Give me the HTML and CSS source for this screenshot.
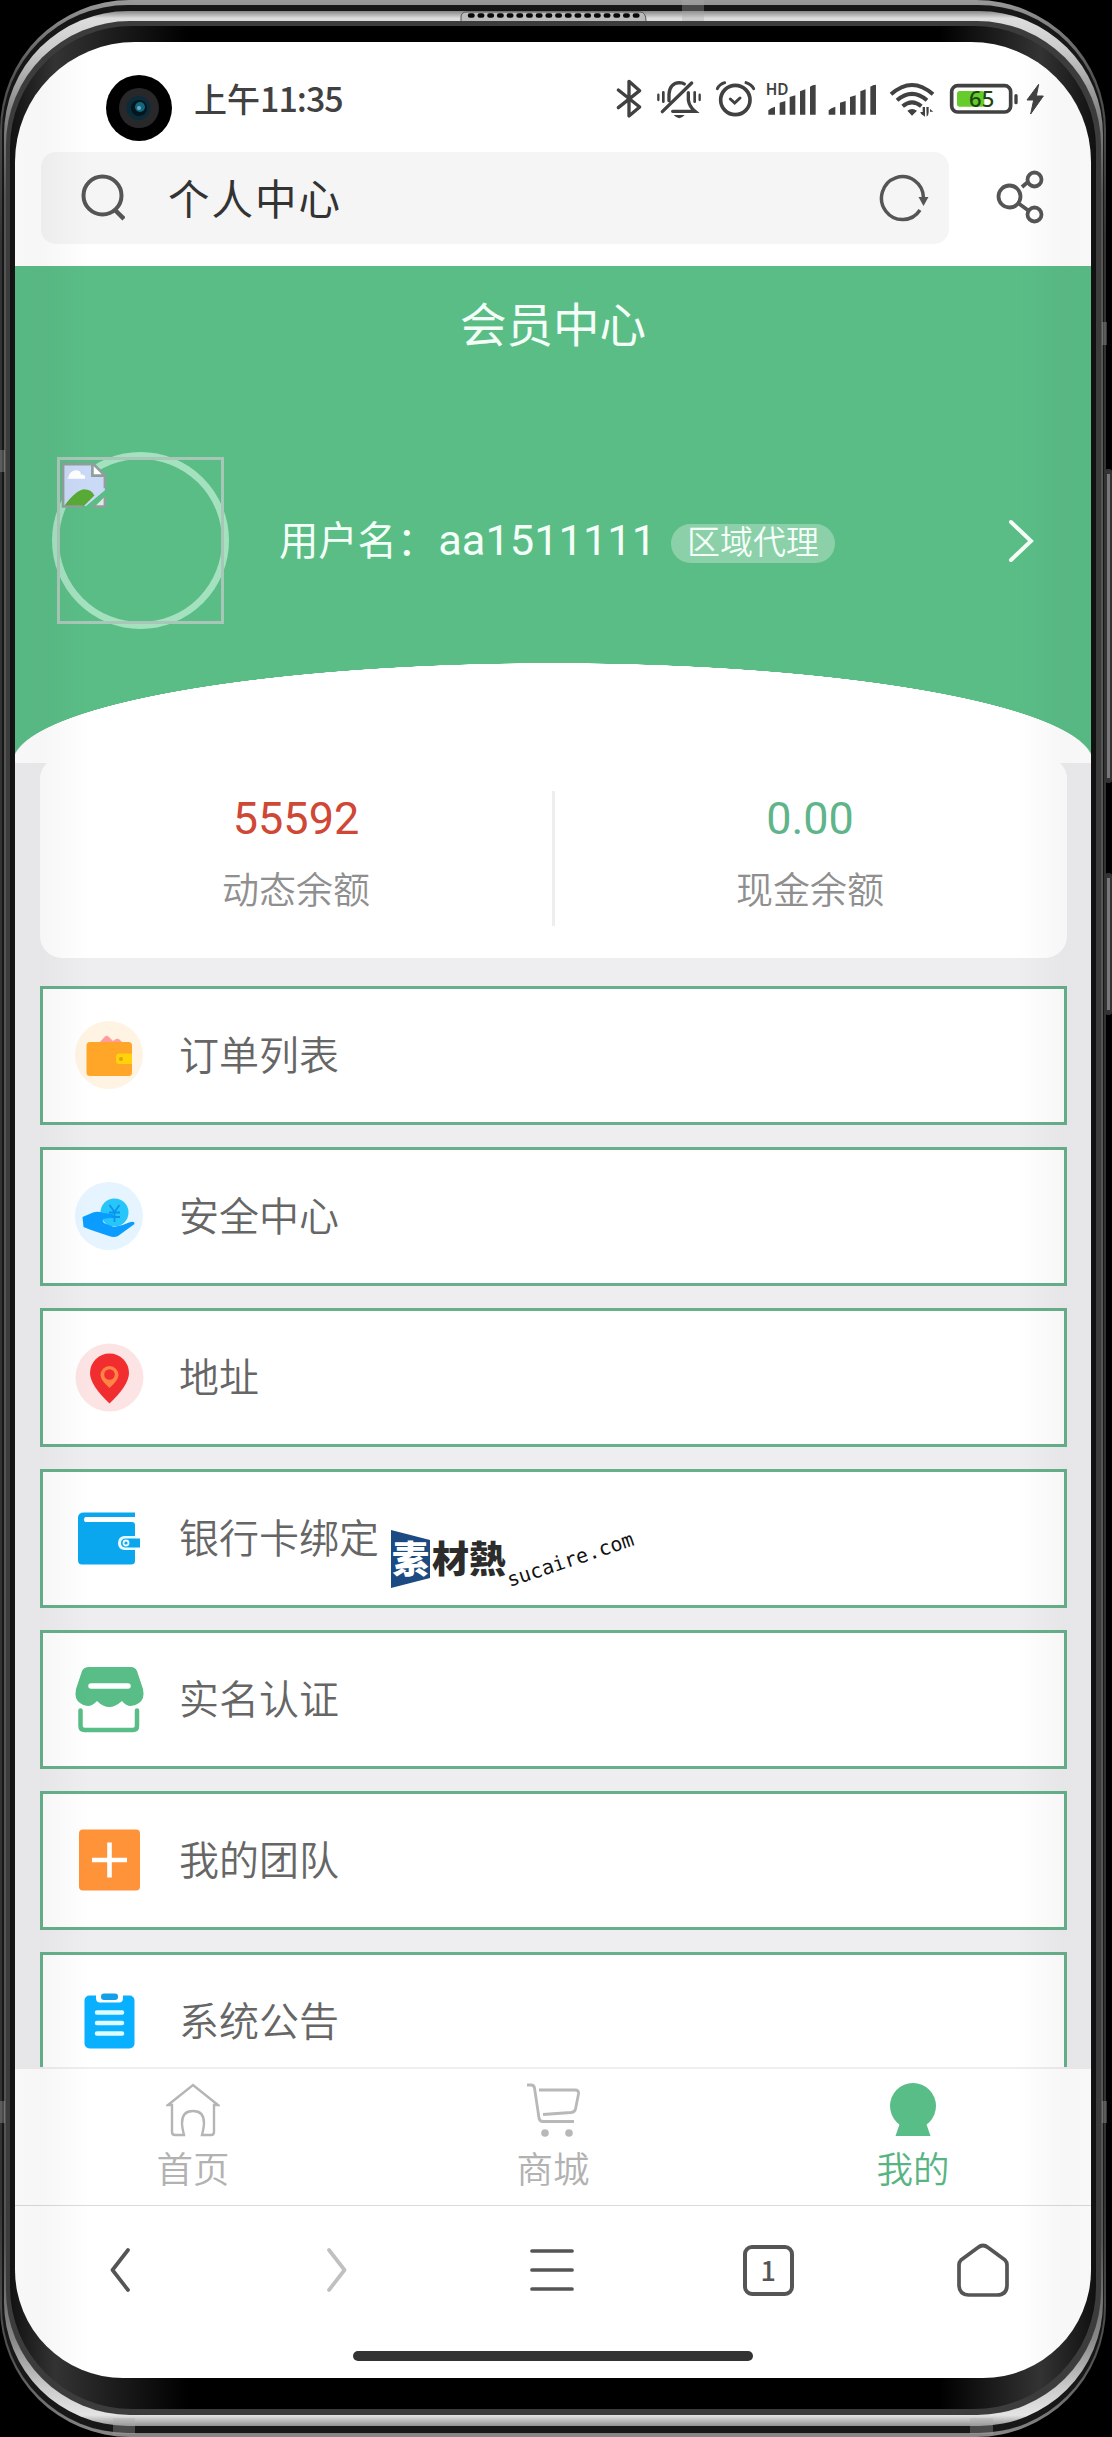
FILE: index.html
```html
<!DOCTYPE html>
<html lang="zh-CN">
<head>
<meta charset="utf-8">
<title>个人中心</title>
<link rel="stylesheet" href="styles.css">
</head>
<body>
<div class="phone">
  <svg class="shell" viewBox="0 0 1112 2437" width="1112" height="2437" aria-hidden="true">
    <defs>
      <linearGradient id="rim" gradientUnits="userSpaceOnUse" x1="0" y1="0" x2="0" y2="2437">
        <stop offset="0" stop-color="#999"/><stop offset=".03" stop-color="#555"/><stop offset=".1" stop-color="#333"/>
        <stop offset=".9" stop-color="#333"/><stop offset=".97" stop-color="#555"/><stop offset="1" stop-color="#888"/>
      </linearGradient>
      <linearGradient id="metal" gradientUnits="userSpaceOnUse" x1="0" y1="0" x2="0" y2="2437">
        <stop offset=".004" stop-color="#777"/><stop offset=".0075" stop-color="#ddd"/><stop offset=".02" stop-color="#ccc"/><stop offset=".045" stop-color="#888"/><stop offset=".08" stop-color="#555"/>
        <stop offset=".92" stop-color="#555"/><stop offset=".96" stop-color="#888"/><stop offset=".98" stop-color="#ccc"/><stop offset=".991" stop-color="#e4e4e4"/><stop offset=".996" stop-color="#888"/>
      </linearGradient>
      <linearGradient id="bezel" gradientUnits="userSpaceOnUse" x1="0" y1="0" x2="1106" y2="0">
        <stop offset="0" stop-color="#0a0a0a"/><stop offset=".05" stop-color="#333"/><stop offset=".17" stop-color="#000"/>
        <stop offset=".85" stop-color="#000"/><stop offset=".94" stop-color="#333"/><stop offset="1" stop-color="#0a0a0a"/>
      </linearGradient>
    </defs>
    <rect x="1105" y="469" width="7" height="314" rx="3" fill="#333"/><rect x="1107" y="474" width="3" height="304" fill="#777"/>
    <rect x="1105" y="873" width="7" height="142" rx="3" fill="#333"/><rect x="1107" y="878" width="3" height="132" fill="#777"/>
    <rect x="0" y="0" width="1106" height="2437" rx="130" fill="url(#rim)"/>
    <rect x="2" y="5" width="1102" height="2428" rx="126" fill="#171717"/>
    <rect x="4" y="11" width="1099" height="2415" rx="124" fill="url(#metal)"/>
    <rect x="6" y="21" width="1095" height="2394" rx="124" fill="#3c3c3c"/>
    <rect x="10" y="26" width="1086" height="2383" rx="122" fill="url(#bezel)"/>
    <path d="M461 21V17q0-5 6-5h173q6 0 6 9" fill="#bbb" stroke="#555"/>
    <path d="M470 15.5H640" stroke="#080808" stroke-width="4.5" stroke-linecap="round" stroke-dasharray="2.5 7.2"/>
    <g fill="#aaa" fill-opacity=".35"><path d="M682 0h22v21h-22zM0 450h5v22H0zM0 2101h5v22H0zM1102 322h5v23h-5zM1102 2101h5v22h-5zM113 2418h22v16h-22zM970 2418h23v16h-23z"/></g>
  </svg>

  <div class="screen">
    <div class="statusbar">
      <svg class="camera" viewBox="0 0 66 66" width="66" height="66">
        <circle cx="33" cy="33" r="33"/><circle cx="33" cy="33" r="20" fill="#28282a"/><circle cx="32.500" cy="33" r="12" fill="#0c2b38"/><circle cx="33" cy="33" r="8" fill="#06141c"/>
        <circle cx="34" cy="32" r="5" fill="#15657d"/><circle cx="33" cy="33" r="2" fill="#63b2c4"/>
      </svg>
      <span class="time">上午<b>11:35</b></span>
      <svg class="status-icons" viewBox="0 0 1380 240" width="460" height="80" fill="none" stroke="#414141">
        <path d="M55 90L119 141L87 168V64L119 92L55 143" stroke-width="10" stroke-linejoin="round" stroke-linecap="round"/>
        <g stroke-width="10" stroke-linecap="round"><path d="M187 155L275 69M207 122V103Q209 70 238 68Q248 68 253 72M265 98V120Q268 140 285 154H218"/><path d="M190 97V125M284 97V125" stroke-width="8"/><path d="M175 104V120M299 104V120" stroke-width="7"/></g>
        <path d="M221 165H254Q238 184 221 165Z" fill="#414141" stroke="none"/>
        <circle cx="406" cy="120" r="44" stroke-width="11"/><path d="M391 117L404 129L420 114" stroke-width="9" stroke-linecap="round"/><path d="M352 86Q358 73 374 68M438 68Q455 74 461 86" stroke-width="9" stroke-linecap="round"/>
        <g fill="#414141" stroke="none">
          <path id="bars" d="M505 164V151Q512 143 525 140V164ZM539 164V128L556 123V164ZM569 164V111L586 106V164ZM600 164V94L616 88V164ZM630 164V80Q638 74 647 74V164Z"/>
          <use href="#bars" x="181"/>
          <path d="M922 152Q936 142 951 152L936 167ZM968 141H975V170Q961 162 961 156H968ZM979 141H986V157Q986 167 980 170ZM990 147L1000 155H990Z"/>
          <text class="hd" x="497" y="106">HD</text>
        </g>
        <path d="M873 103Q936 47 999 103M891 121Q936 82 981 121M908 139Q936 115 964 139" stroke-width="12"/>
        <rect x="1071" y="93" width="82" height="47" rx="8" fill="#65cc2b" stroke="none"/>
        <rect x="1055" y="77" width="177" height="79" rx="18" stroke-width="11"/>
        <path d="M1248 107V128" stroke-width="10" stroke-linecap="round"/>
        <text class="level" x="1145" y="142">65</text>
        <path d="M1316 73L1281 120H1301L1292 162L1330 108H1309Z" fill="#414141" stroke-width="3" stroke-linejoin="round"/>
      </svg>
    </div>

    <div class="addressbar">
      <div class="address">
        <svg viewBox="0 0 44 48" width="44" height="48" fill="none" stroke="#555" stroke-width="4"><circle cx="21.500" cy="21.500" r="19"/><path d="M34 36L43 45" stroke-width="4.500"/></svg>
        <span class="address-title">个人中心</span>
        <svg class="reload" viewBox="0 0 50 50" width="50" height="50" fill="none" stroke="#555" stroke-width="3.500"><path d="M41 37A21 21.500 0 1 1 44.500 25"/><path d="M39.500 24H49.500L44.500 33Z" fill="#555" stroke="none"/></svg>
      </div>
      <svg class="share" viewBox="0 0 50 54" width="50" height="54" fill="none" stroke="#555" stroke-width="3.800"><circle cx="14.500" cy="26.500" r="11"/><circle cx="39.500" cy="9.500" r="7"/><circle cx="39.500" cy="44.500" r="7"/><path d="M27 17L34 11M23 33L34 41"/></svg>
    </div>

    <header class="hero">
      <h1 class="hero-title">会员中心</h1>
      <div class="profile">
        <div class="avatar">
          <div class="avatar-box">
            <svg viewBox="0 0 44 44" width="46" height="46">
              <path d="M2 2H31V12H42V27L24 42H2Z" fill="#c9d9f6"/><path d="M31 2L42 13H31Z" fill="#fff"/>
              <path d="M7 15Q8 9 14 8Q19 8 19 12Q24 12 23 16H6Z" fill="#fff"/>
              <path d="M3 42Q14 27 22 26Q29 26 32 32L21 43Z" fill="#58aa35"/>
              <path d="M32 43L42 33V43Z" fill="#dcebe4"/>
              <path d="M21 42.500H2V2H31L42 13V25M30 2V13H42M30 42.500H42V33" fill="none" stroke="#8f9f9b" stroke-width="2.500"/>
            </svg>
          </div>
        </div>
        <span class="username">用户名：</span><span class="userid">aa1511111</span><span class="badge">区域代理</span>
        <svg class="more" viewBox="0 0 26 46" width="26" height="46" fill="none" stroke="#f4fff8" stroke-width="4" stroke-linecap="round"><path d="M3 4L23 23L3 42"/></svg>
      </div>
    </header>

    <main class="content">
      <section class="balances">
        <div class="balance"><strong class="amount amount-red">55592</strong><span class="label">动态余额</span></div>
        <div class="balance"><strong class="amount">0.00</strong><span class="label">现金余额</span></div>
      </section>
      <nav class="menu">
        <a class="item">
          <svg class="icon" viewBox="0 0 68 68"><circle cx="34" cy="34" r="34" fill="#fff3e3"/><path d="M24 22L30 15.500Q32 14 34 16L38 20L41 18Q43 17 45 19L48 22Z" fill="#ff9c9c"/><rect x="11.500" y="21" width="45.500" height="34" rx="3.500" fill="#ffa527"/><path d="M57 32.500H44Q41 32.500 41 36V40Q41 43 44 43H57Z" fill="#ffd20c"/><circle cx="46" cy="38" r="2" fill="#e2a500"/></svg>
          <span>订单列表</span></a>
        <a class="item">
          <svg class="icon" viewBox="0 0 68 68"><circle cx="34" cy="34" r="34" fill="#e5f4fe"/><circle cx="39.500" cy="30.500" r="14" fill="#27c6fa"/><path d="M34.500 23L39.500 30L44.500 23M34 30.500H45M34 35H45M39.500 30V40" fill="none" stroke="#0a94ea" stroke-width="1.800"/><path d="M7.500 35L18 30.500Q23 29 28 31L38 32Q40 35 35 36L28 37Q27 39 29 41L39 45Q47 44 54 40.500Q60 38.500 59.500 42L43 54Q39 56 34 54L16 48L8.500 45Z" fill="#0a9dff"/></svg>
          <span>安全中心</span></a>
        <a class="item">
          <svg class="icon" viewBox="0 0 68 68"><circle cx="34.500" cy="34.500" r="34" fill="#fde4e4"/><path d="M34.500 60.500Q15 42 15 30A19.500 19.500 0 0 1 54 30Q54 42 34.500 60.500Z" fill="#f12d2f"/><path d="M34.500 45Q25.500 37 25.500 32A9 9 0 0 1 43.500 32Q43.500 37 34.500 45Z" fill="#ff8446"/><circle cx="34.500" cy="31.500" r="5.300" fill="#f12d2f"/></svg>
          <span>地址</span></a>
        <a class="item">
          <svg class="icon" viewBox="0 0 68 68"><path d="M9 8.500H60V13H10Q8 16 10 18H57Q60 18 60 21V57Q60 60.500 56 60.500H7Q3 60.500 3 56V14Q3 8.500 9 8.500Z" fill="#0aa7ef"/><path d="M61 32H49Q43 33 43 39Q43 45 49 46H61" fill="#e8faff"/><path d="M65 34.500H50Q46 35 46 39Q46 43 50 43.500H65Z" fill="#0aa7ef"/><circle cx="51" cy="39" r="2.500" fill="none" stroke="#e8faff" stroke-width="1.800"/></svg>
          <span>银行卡绑定</span></a>
        <a class="item">
          <svg class="icon" viewBox="0 0 68 68"><path d="M14 2H56Q60 2 62 6L68 24Q70 34 64 38Q54 45 47 36Q40 42 34.500 42Q28 42 22 36Q14 45 5 38Q-1 34 1 24L7 6Q9 2 14 2Z" fill="#58bd86"/><path d="M16 21H53" stroke="#fff" stroke-width="5.500" stroke-linecap="round"/><path d="M5.500 45.500V61Q5.500 65 9.500 65H58Q62 65 62 61V45.500" fill="none" stroke="#58bd86" stroke-width="4.500" stroke-linecap="round"/></svg>
          <span>实名认证</span></a>
        <a class="item">
          <svg class="icon" viewBox="0 0 68 68"><rect x="4" y="3.500" width="61" height="61" rx="4" fill="#ff933a"/><path d="M34.500 16.500V51.500M17 34H52" stroke="#fff" stroke-width="4.600"/></svg>
          <span>我的团队</span></a>
        <a class="item">
          <svg class="icon" viewBox="0 0 68 68"><rect x="9.500" y="8.500" width="50" height="53" rx="5" fill="#08b0ff"/><path d="M21 7.500H48V11Q48 15.500 44 15.500H25Q21 15.500 21 11Z" fill="#fff"/><rect x="26" y="6.500" width="17" height="6.500" rx="3" fill="#159fe6"/><path d="M22 25.500H47M22 36H47M22 46.500H47" stroke="#defcff" stroke-width="4.500" stroke-linecap="round"/></svg>
          <span>系统公告</span></a>
      </nav>
    </main>

    <nav class="tabbar">
      <a class="tab"><svg viewBox="0 0 54 54" width="54" height="54" fill="none" stroke="#b5b5b5" stroke-width="2.400"><path d="M2 22L27 2L52 22H48V49Q48 52 45 52H36Q38 44 38 40Q38 28 27 28Q16 28 16 40Q16 44 18 52H9Q6 52 6 49V22Z"/></svg>首页</a>
      <a class="tab"><svg viewBox="0 0 54 54" width="54" height="54" fill="none" stroke="#b8b8b8" stroke-width="2.800"><path d="M1 2H5Q8 2 8.500 5L13 35Q13.500 38.500 17 38.500H48M13 7H49Q53 7 52.500 11L49.500 26Q49 29 45 29.500L17 31.500"/><circle cx="19" cy="50" r="3.800" fill="#b8b8b8" stroke="none"/><circle cx="43" cy="50" r="3.800" fill="#b8b8b8" stroke="none"/></svg>商城</a>
      <a class="tab tab-active"><svg viewBox="0 0 54 54" width="54" height="54"><circle cx="27" cy="23" r="23" fill="#58bd86"/><path d="M14 40H40L44.500 53H9.500Z" fill="#58bd86"/></svg>我的</a>
    </nav>

    <nav class="browserbar">
      <svg class="nav-back" viewBox="0 0 54 54"><path d="M32 7L16.500 27L32 47"/></svg>
      <svg class="nav-forward" viewBox="0 0 54 54"><path d="M18 7L33.500 27L18 47"/></svg>
      <svg viewBox="0 0 54 54"><path d="M6 8H46M6 27H46M6 46H46"/></svg>
      <span class="tabs-count">1</span>
      <svg viewBox="0 0 54 54"><path d="M22 4.500Q27 .5 32 4.500L49 17Q51 19 51 22V42Q51 52 41 52H13Q3 52 3 42V22Q3 19 5 17Z"/></svg>
    </nav>
    <div class="home-indicator"></div>
    <div class="edge-shade"></div>
  </div>

  <div class="watermark">
    <svg viewBox="0 0 39 58" width="39" height="58"><path d="M0 0L39 10V48L0 58Z" fill="#1c4a82"/></svg>
    <span class="wm-mark">素</span><span class="wm-name">材熱</span><span class="wm-site">sucaire.com</span>
  </div>
</div>
</body>
</html>
```
FILE: styles.css
```css
* { box-sizing: border-box; }

body {
  margin: 0;
  background: #000;
  font-family: Roboto, "Noto Sans CJK SC", sans-serif;
}

.phone {
  position: relative;
  width: 1112px;
  height: 2437px;
  padding: 42px 21px 59px 15px;
  background: #000;
  overflow: hidden;
}

.shell {
  position: absolute;
  left: 0;
  top: 0;
}

.screen {
  position: relative;
  display: flex;
  flex-direction: column;
  height: 2336px;
  border-radius: 120px 120px 108px 108px;
  background: #fff;
  overflow: hidden;
}

.statusbar {
  display: flex;
  align-items: flex-start;
  flex: 0 0 110px;
  padding: 18px 31px 0 91px;
}

.camera { margin-top: 15px; }

.time {
  margin: 14px 0 0 22px;
  color: #414141;
  font: 500 33px/48px "Noto Sans CJK SC", sans-serif;
}

.time b {
  font: 500 34px/48px "Noto Sans CJK SC", sans-serif;
  letter-spacing: -1px;
}

.status-icons { margin-left: auto; }

.hd, .level { font-family: "Noto Sans", sans-serif; stroke: none; }
.hd { font-size: 46px; font-weight: 600; }
.level { font-size: 66px; font-weight: 500; fill: #1d4510; text-anchor: middle; }

.addressbar {
  display: flex;
  align-items: center;
  flex: 0 0 92px;
  padding: 0 46px 0 26px;
  margin-bottom: 22px;
}

.address {
  display: flex;
  align-items: center;
  width: 908px;
  height: 92px;
  padding: 0 20px 0 40px;
  border-radius: 15px;
  background: #f5f5f5;
}

.address-title {
  margin: 5px 0 0 43px;
  color: #333;
  font-size: 41.5px;
  line-height: 60px;
  letter-spacing: 2px;
}

.reload { margin-left: auto; }
.share { margin-left: auto; margin-top: -3px; }

.hero {
  flex: 0 0 497px;
  background: radial-gradient(541px 100px at 538px 497px, #fff 99.7%, #5abd86 100%);
  color: #f4fff8;
}

.hero-title {
  margin: 0;
  padding-top: 26px;
  font-size: 46.5px;
  font-weight: 400;
  line-height: 68px;
  text-align: center;
}

.profile {
  display: flex;
  align-items: center;
  height: 177px;
  margin-top: 92px;
  padding: 0 57px 0 37px;
}

.avatar {
  width: 177px;
  height: 177px;
  padding: 5px;
  flex: none;
  position: relative;
}

.avatar::before {
  content: "";
  position: absolute;
  inset: 0;
  border: 7px solid #a4e1bf;
  border-radius: 50%;
}

.avatar-box {
  position: relative;
  width: 167px;
  height: 167px;
  padding: 2px 1px;
  border: 3px solid #a9c7b8;
}

.username {
  margin: -7px 0 0 50px;
  font-size: 39.3px;
  font-weight: 400;
  white-space: nowrap;
}

.userid { margin: -1px 0 0 2px; font-size: 43.4px; }

.badge {
  height: 39px;
  margin: 6px 0 0 15px;
  padding: 0 16px;
  border-radius: 20px;
  background: #8bd0a9;
  font-size: 33px;
  font-weight: 350;
  line-height: 37px;
}

.more { margin-left: auto; }

.content {
  flex: 0 0 1304px;
  padding: 0 24px 0 25px;
  background: #eeeef0;
  overflow: hidden;
}

.balances {
  display: grid;
  grid-template-columns: 512px 1fr;
  height: 201px;
  margin-top: -6px;
  padding: 34px 0 32px;
  border-radius: 22px;
  background: #fff;
}

.balance {
  display: flex;
  flex-direction: column;
  align-items: center;
}

.balance + .balance { padding-right: 2px; border-left: 3px solid #eeeeef; }

.amount {
  margin-top: 1px;
  color: #60b48a;
  font-size: 45px;
  font-weight: 400;
  line-height: 54px;
}

.amount-red { color: #cf4735; }

.label {
  margin-top: 19px;
  color: #8f8f8f;
  font-size: 37px;
  font-weight: 350;
  line-height: 54px;
}

.menu {
  display: flex;
  flex-direction: column;
  gap: 22px;
  margin-top: 28px;
}

.item {
  display: flex;
  align-items: center;
  flex: 0 0 139px;
  gap: 36px;
  padding: 0 32px 1px;
  border: 3px solid #67b08b;
  background: #fff;
  color: #666;
  font-size: 40px;
  font-weight: 350;
}

.item span { margin-top: -5px; }

.icon {
  width: 68px;
  height: 68px;
  overflow: visible;
}

.tabbar {
  display: grid;
  grid-template-columns: repeat(3, 1fr);
  flex: 0 0 138px;
  margin: 0 -2px;
  border-top: 2px solid #eee;
  border-bottom: 1px solid #dcdcdc;
  background: #fff;
}

.tab {
  display: flex;
  flex-direction: column;
  align-items: center;
  padding-top: 14px;
  color: #b2b2b2;
  font-size: 36.5px;
  font-weight: 350;
  line-height: 68px;
}

.tab-active { color: #58b583; }

.browserbar {
  display: grid;
  grid-template-columns: repeat(5, 1fr);
  place-items: center;
  height: 128px;
}

.browserbar svg {
  width: 54px;
  height: 54px;
  fill: none;
  stroke: #555;
  stroke-width: 3.7px;
  stroke-linecap: round;
  stroke-linejoin: round;
}

.browserbar .nav-forward { stroke: #c0c0c0; }

.tabs-count {
  width: 51px;
  height: 51px;
  border: 4px solid #555;
  border-radius: 9px;
  color: #555;
  font: 500 27px/41px "Noto Sans CJK SC", sans-serif;
  text-align: center;
}

.home-indicator {
  width: 400px;
  height: 10px;
  margin: 17px auto 0;
  border-radius: 5px;
  background: #333;
}

/* soft falloff along the curved left and right glass edges */
.edge-shade {
  position: absolute;
  inset: 0;
  background: linear-gradient(90deg, rgba(20,20,30,.03) 0, rgba(20,20,30,.035) 28px, transparent 75px, transparent calc(100% - 75px), rgba(20,20,30,.035) calc(100% - 28px), rgba(20,20,30,.03) 100%);
}

.watermark {
  position: absolute;
  left: 391px;
  top: 1530px;
  width: 250px;
  height: 60px;
  font-family: "Noto Sans CJK TC", sans-serif;
  font-size: 37px;
  font-weight: 900;
  line-height: 54px;
}

.wm-mark { position: absolute; left: 1px; top: 0; color: #fff; }
.wm-name { position: absolute; left: 41px; top: 0; color: #2c2c2c; }

.wm-site {
  position: absolute;
  left: 119px;
  top: 38px;
  color: #111;
  font: 20px/24px "DejaVu Sans Mono", monospace;
  transform: rotate(-18.5deg);
  transform-origin: 0 20px;
}
```
